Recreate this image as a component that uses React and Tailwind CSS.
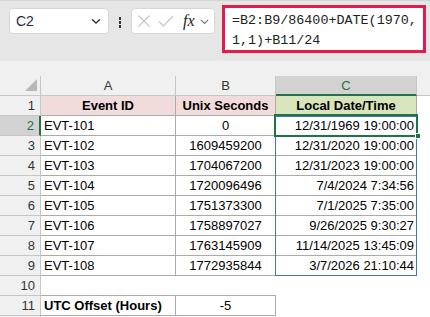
import React from 'react';

const rows = [
  ['EVT-101', '0', '12/31/1969 19:00:00'],
  ['EVT-102', '1609459200', '12/31/2020 19:00:00'],
  ['EVT-103', '1704067200', '12/31/2023 19:00:00'],
  ['EVT-104', '1720096496', '7/4/2024 7:34:56'],
  ['EVT-105', '1751373300', '7/1/2025 7:35:00'],
  ['EVT-106', '1758897027', '9/26/2025 9:30:27'],
  ['EVT-107', '1763145909', '11/14/2025 13:45:09'],
  ['EVT-108', '1772935844', '3/7/2026 21:10:44'],
];

const RowHead = ({ n, active }) => (
  <div
    className={`w-[41px] shrink-0 border-b border-r pr-[5px] text-right leading-[19px] ${
      active ? 'border-r-2 border-b-[#c6c6c6] border-r-[#217346] bg-[#d2d2d2] text-[#217346]' : 'border-[#c6c6c6] bg-[#f0f0f0] text-[#333]'
    }`}
  >
    {n}
  </div>
);

const Chevron = ({ className }) => (
  <svg viewBox="0 0 12 12" className={className} fill="none" stroke="currentColor" strokeWidth="1.3">
    <path d="M2 4.2 L6 8 L10 4.2" />
  </svg>
);

export default function App() {
  return (
    <div className="h-[317px] w-[430px] overflow-hidden bg-white font-['Liberation_Sans',Arial,sans-serif] text-[13px] text-black">
      {/* Formula bar */}
      <div className="flex h-[61px] items-start border-t border-[#d4d4d4] bg-[#e6e6e6]">
        <div className="ml-[9px] mt-[7px] flex h-[26px] w-[100px] items-center justify-between rounded-[4px] border border-[#d6d6d6] bg-white pl-[6px] pr-[6px]">
          <span className="text-[14px] text-[#1f2b4d]">C2</span>
          <Chevron className="h-[12px] w-[12px] text-[#333]" />
        </div>
        <div className="mt-[16px] flex w-[22px] flex-col items-center gap-[1.5px]">
          <span className="h-[2.5px] w-[2.5px] bg-[#333]" />
          <span className="h-[2.5px] w-[2.5px] bg-[#333]" />
          <span className="h-[2.5px] w-[2.5px] bg-[#333]" />
        </div>
        <div className="mt-[7px] flex h-[26px] w-[84px] items-center rounded-[4px] border border-[#d6d6d6] bg-white pl-[5px]">
          <svg viewBox="0 0 14 14" className="h-[14px] w-[14px]" fill="none" stroke="#c4c4c4" strokeWidth="1.2">
            <path d="M1.5 1.5 L12.5 12.5 M12.5 1.5 L1.5 12.5" />
          </svg>
          <svg viewBox="0 0 16 14" className="ml-[7px] h-[14px] w-[16px]" fill="none" stroke="#c4c4c4" strokeWidth="1.2">
            <path d="M1 7.5 L5.5 12 L15 2" />
          </svg>
          <span className="ml-[9px] font-['Liberation_Serif',serif] text-[16px] italic leading-none text-[#222]">fx</span>
          <Chevron className="ml-[4px] h-[11px] w-[11px] text-[#777]" />
        </div>
        <div className="ml-[7px] mt-[4px] h-[48px] w-[204px] border-[3px] border-[#e11b4c] bg-white pl-[7px] pt-[3px] font-['Liberation_Mono',monospace] text-[13.4px] leading-[20px] text-[#222]">
          <div>=B2:B9/86400+DATE(1970,</div>
          <div>1,1)+B11/24</div>
        </div>
      </div>

      <div className="h-[15px] bg-[#f0f0f0]" />

      {/* Grid */}
      <div className="relative">
        {/* column headers */}
        <div className="flex h-[20px] bg-[#f0f0f0] leading-[19px] text-[#333]">
          <div className="relative w-[41px] shrink-0 border-b border-r border-[#c6c6c6]">
            <svg viewBox="0 0 12 12" className="absolute bottom-[4px] right-[3px] h-[12px] w-[12px]">
              <path d="M12 0 L12 12 L0 12 Z" fill="#b8b8b8" />
            </svg>
          </div>
          <div className="w-[135px] shrink-0 border-b border-r border-[#c6c6c6] text-center">A</div>
          <div className="w-[100px] shrink-0 border-b border-r border-[#c6c6c6] text-center">B</div>
          <div className="w-[141px] shrink-0 border-b-2 border-r border-b-[#217346] border-r-[#c6c6c6] bg-[#d2d2d2] text-center text-[#217346]">C</div>
          <div className="flex-1 border-b border-[#c6c6c6]" />
        </div>

        {/* row 1 */}
        <div className="flex h-[20px] leading-[19px]">
          <RowHead n={1} />
          <div className="w-[135px] shrink-0 border-b border-r border-[#ababab] bg-[#f2dcdb] text-center font-bold">Event ID</div>
          <div className="w-[100px] shrink-0 border-b border-r border-[#ababab] bg-[#f2dcdb] text-center font-bold">Unix Seconds</div>
          <div className="w-[141px] shrink-0 border-b border-r border-[#ababab] bg-[#d8e4bc] text-center font-bold">Local Date/Time</div>
          <div className="flex-1" />
        </div>

        {rows.map(([id, secs, local], i) => (
          <div key={id} className="flex h-[20px] leading-[19px]">
            <RowHead n={i + 2} active={i === 0} />
            <div className="w-[135px] shrink-0 border-b border-r border-[#ababab] pl-[3px]">{id}</div>
            <div className="w-[100px] shrink-0 border-b border-r border-[#ababab] text-center">{secs}</div>
            <div className="w-[141px] shrink-0 border-b border-r border-[#ababab] pr-[2px] text-right">{local}</div>
            <div className="flex-1" />
          </div>
        ))}

        {/* row 10 */}
        <div className="flex h-[20px] leading-[19px]">
          <RowHead n={10} />
          <div className="w-[135px] shrink-0 border-b border-[#ababab]" />
          <div className="w-[100px] shrink-0 border-b border-[#ababab]" />
          <div className="flex-1" />
        </div>

        {/* row 11 */}
        <div className="flex h-[20px] leading-[19px]">
          <RowHead n={11} />
          <div className="w-[135px] shrink-0 border-b border-r border-[#ababab] pl-[3px] font-bold">UTC Offset (Hours)</div>
          <div className="w-[100px] shrink-0 border-b border-r border-[#ababab] text-center">-5</div>
          <div className="flex-1" />
        </div>

        {/* row 12, only its top edge is in view */}
        <div className="flex h-[20px]">
          <div className="w-[41px] shrink-0 border-r border-[#c6c6c6] bg-[#f0f0f0]" />
          <div className="flex-1" />
        </div>

        {/* spill range outline C2:C9 */}
        <div className="pointer-events-none absolute left-[275px] top-[40px] h-[160px] w-[142px] border border-[#4472c4]" />
        {/* active cell C2 */}
        <div className="pointer-events-none absolute left-[274px] top-[38px] h-[23px] w-[144px] border-2 border-[#217346]" />
        <div className="pointer-events-none absolute left-[415px] top-[57px] h-[6px] w-[6px] border border-white bg-[#217346]" />
      </div>
    </div>
  );
}
